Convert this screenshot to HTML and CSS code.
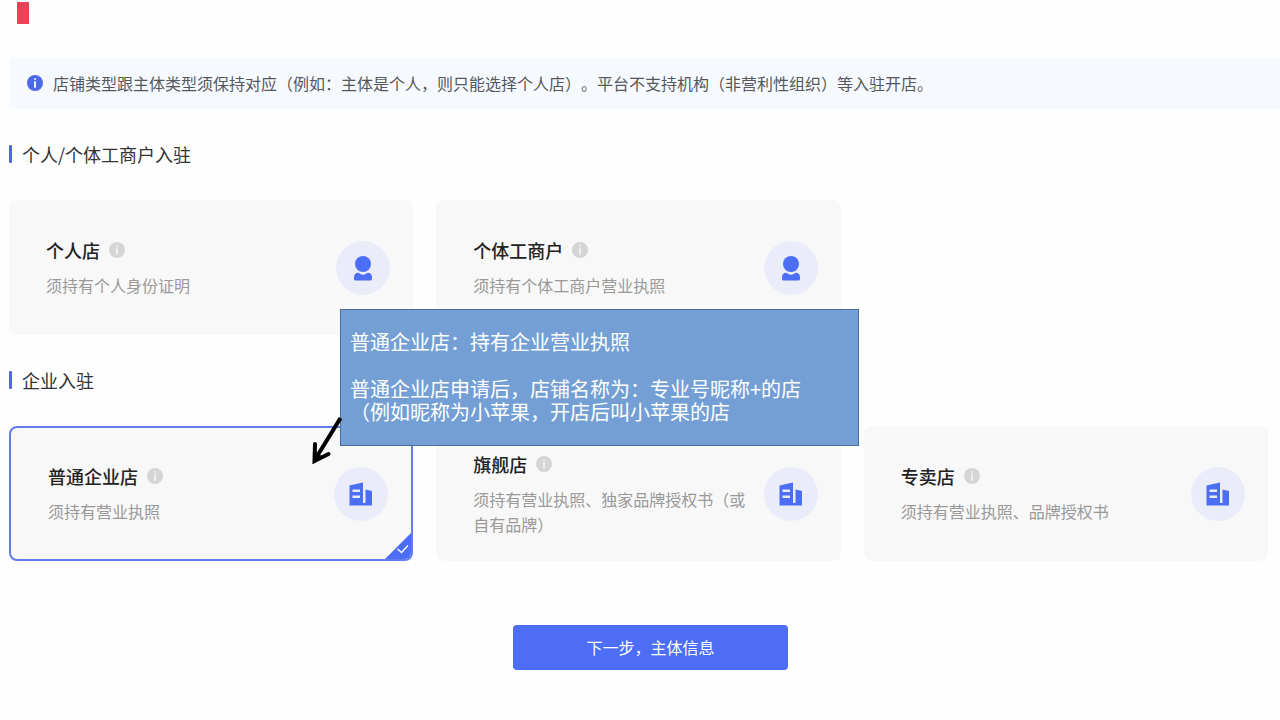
FILE: index.html
```html
<!DOCTYPE html>
<html lang="zh-CN">
<head>
<meta charset="utf-8">
<meta name="viewport" content="width=device-width, initial-scale=1">
<title>选择店铺类型</title>
<link rel="stylesheet" href="styles.css">
</head>
<body>
<svg class="sprite" aria-hidden="true">
  <symbol id="info" viewBox="0 0 16 16">
    <circle cx="8" cy="8" r="8" fill="currentColor"/>
    <rect class="info-mark" x="7" y="3" width="2" height="2" rx="1"/>
    <rect class="info-mark" x="7" y="6" width="2" height="7" rx="1"/>
  </symbol>
  <symbol id="person" viewBox="0 0 54 54">
    <path d="M20.500 32Q22.500 31.500 24 32.800Q27 34.500 30 32.800Q31.500 31.500 33.500 32Q36 33 36 36V38Q36 39.500 34.500 39.500H19.500Q18 39.500 18 38V36Q18 33 20.500 32Z" fill="currentColor"/>
    <circle cx="27" cy="23" r="8" fill="currentColor"/>
  </symbol>
  <symbol id="building" viewBox="0 0 54 54">
    <path d="M15.500 18.500L29 15.500V36H31.500V22.500L38 24V38.500H15.500ZM18.500 22.500V25H26V22.500ZM18.500 28.500V31H26V28.500Z" fill="currentColor" fill-rule="evenodd"/>
  </symbol>
</svg>
<main class="page">
  <header class="top"><span class="marker"></span></header>
  <p class="notice">
    <svg class="info notice-icon" aria-hidden="true"><use href="#info"/></svg>
    <span>店铺类型跟主体类型须保持对应（例如：主体是个人，则只能选择个人店）。平台不支持机构（非营利性组织）等入驻开店。</span>
  </p>
  <form class="form">
    <section class="group">
      <h2 class="heading">个人/个体工商户入驻</h2>
      <div class="cards">
        <label class="card">
          <input class="choice" type="radio" name="shop" value="personal">
          <span class="text">
            <span class="name">个人店<svg class="info" aria-hidden="true"><use href="#info"/></svg></span>
            <span class="desc">须持有个人身份证明</span>
          </span>
          <svg class="avatar" aria-hidden="true"><use href="#person"/></svg>
        </label>
        <label class="card">
          <input class="choice" type="radio" name="shop" value="individual">
          <span class="text">
            <span class="name">个体工商户<svg class="info" aria-hidden="true"><use href="#info"/></svg></span>
            <span class="desc">须持有个体工商户营业执照</span>
          </span>
          <svg class="avatar" aria-hidden="true"><use href="#person"/></svg>
        </label>
      </div>
    </section>
    <section class="group">
      <h2 class="heading">企业入驻</h2>
      <div class="cards">
        <label class="card card-selected">
          <input class="choice" type="radio" name="shop" value="company" checked>
          <span class="text">
            <span class="name">普通企业店<svg class="info" aria-hidden="true"><use href="#info"/></svg></span>
            <span class="desc">须持有营业执照</span>
          </span>
          <svg class="avatar" aria-hidden="true"><use href="#building"/></svg>
          <svg class="corner" viewBox="0 0 26 26" aria-hidden="true">
            <path d="M26 0V26H0Z" fill="#4c6ef5"/>
            <path d="M12.500 16L16.500 19.500L23 12.500" fill="none" stroke="#fff" stroke-width="1.300"/>
          </svg>
        </label>
        <label class="card">
          <input class="choice" type="radio" name="shop" value="flagship">
          <span class="text">
            <span class="name">旗舰店<svg class="info" aria-hidden="true"><use href="#info"/></svg></span>
            <span class="desc">须持有营业执照、独家品牌授权书（或自有品牌）</span>
          </span>
          <svg class="avatar" aria-hidden="true"><use href="#building"/></svg>
        </label>
        <label class="card">
          <input class="choice" type="radio" name="shop" value="exclusive">
          <span class="text">
            <span class="name">专卖店<svg class="info" aria-hidden="true"><use href="#info"/></svg></span>
            <span class="desc">须持有营业执照、品牌授权书</span>
          </span>
          <svg class="avatar" aria-hidden="true"><use href="#building"/></svg>
        </label>
      </div>
    </section>
    <div class="actions"><button class="next" type="button">下一步，主体信息</button></div>
  </form>
  <aside class="callout">
    <p class="callout-line">普通企业店：持有企业营业执照</p>
    <p class="callout-line">普通企业店申请后，店铺名称为：专业号昵称+的店<br>（例如昵称为小苹果，开店后叫小苹果的店</p>
    <svg class="arrow" viewBox="0 0 34 52" aria-hidden="true">
      <path d="M32.500 2L8 42" fill="none" stroke="#000" stroke-width="4"/>
      <path d="M7 28L6.500 45L20.500 38" fill="none" stroke="#000" stroke-width="4" stroke-linecap="round"/>
      <path d="M5 48L8 36L15 41Z" fill="#000"/>
    </svg>
  </aside>
</main>
</body>
</html>
```
FILE: styles.css
```css
* {
  box-sizing: border-box;
}

body {
  margin: 0;
  background: #fefefe;
  color: #333;
  font-family: "Noto Sans CJK SC", sans-serif;
  font-size: 16px;
  text-spacing-trim: space-all;
}

.sprite {
  position: absolute;
  width: 0;
  height: 0;
}

.page {
  position: relative;
  padding-left: 9px;
}

.top {
  height: 57px;
  padding: 2px 8px;
}

.marker {
  display: block;
  width: 12px;
  height: 22px;
  background: #e9435a;
}

.notice {
  display: flex;
  align-items: center;
  gap: 10px;
  margin: 0 0 31px;
  padding: 14px 18px;
  background: #f6faff;
  color: #55575b;
  line-height: 24px;
}

.info {
  flex: none;
  width: 16px;
  height: 16px;
  color: #d5d5d5;
}

.info-mark {
  fill: #f0f0f0;
}

.notice-icon {
  color: #4c6ae8;
}

.form {
  padding-right: 12px;
}

.group {
  margin-bottom: 31px;
}

.heading {
  display: flex;
  align-items: center;
  gap: 10px;
  margin: 0 0 32px;
  font-size: 18px;
  font-weight: 400;
  line-height: 28px;
}

.heading::before {
  content: "";
  width: 3px;
  height: 18px;
  border-radius: 1px;
  background: #4c69e6;
}

.cards {
  display: grid;
  grid-template-columns: repeat(3, 1fr);
  gap: 23px;
}

.card {
  position: relative;
  display: flex;
  align-items: center;
  justify-content: space-between;
  gap: 16px;
  min-height: 135px;
  padding: 12px 23px 12px 37px;
  border-radius: 8px;
  background: #f8f8f8;
}

.card-selected {
  border: 2px solid #647bea;
  overflow: hidden;
}

.choice {
  position: absolute;
  inset: 0;
  margin: 0;
  opacity: 0;
}

.text {
  display: flex;
  flex-direction: column;
  gap: 10px;
}

.name {
  display: flex;
  align-items: center;
  gap: 9px;
  color: #222;
  font-size: 18px;
  font-weight: 500;
  line-height: 26px;
}

.desc {
  color: #999;
  line-height: 25px;
}

.avatar {
  flex: none;
  width: 54px;
  height: 54px;
  border-radius: 50%;
  background: #ebecfa;
  color: #4c6ef5;
}

.corner {
  position: absolute;
  right: 0;
  bottom: 0;
  width: 26px;
  height: 26px;
}

.actions {
  display: flex;
  justify-content: center;
  padding: 33px 0 33px 24px;
}

.next {
  width: 275px;
  padding: 10px;
  border: 0;
  border-radius: 4px;
  background: #4d6df6;
  color: #fff;
  font: inherit;
  line-height: 25px;
}

.callout {
  position: absolute;
  top: 309px;
  left: 340px;
  width: 519px;
  padding: 20px 9px 22px;
  border: 1px solid #486f9f;
  background: #749fd5;
  color: #fff;
  font-size: 20px;
  line-height: 23px;
}

.callout-line {
  margin: 0;
}

.callout-line + .callout-line {
  margin-top: 24px;
}

.arrow {
  position: absolute;
  top: 106px;
  left: -33px;
  width: 34px;
  height: 52px;
}
```
